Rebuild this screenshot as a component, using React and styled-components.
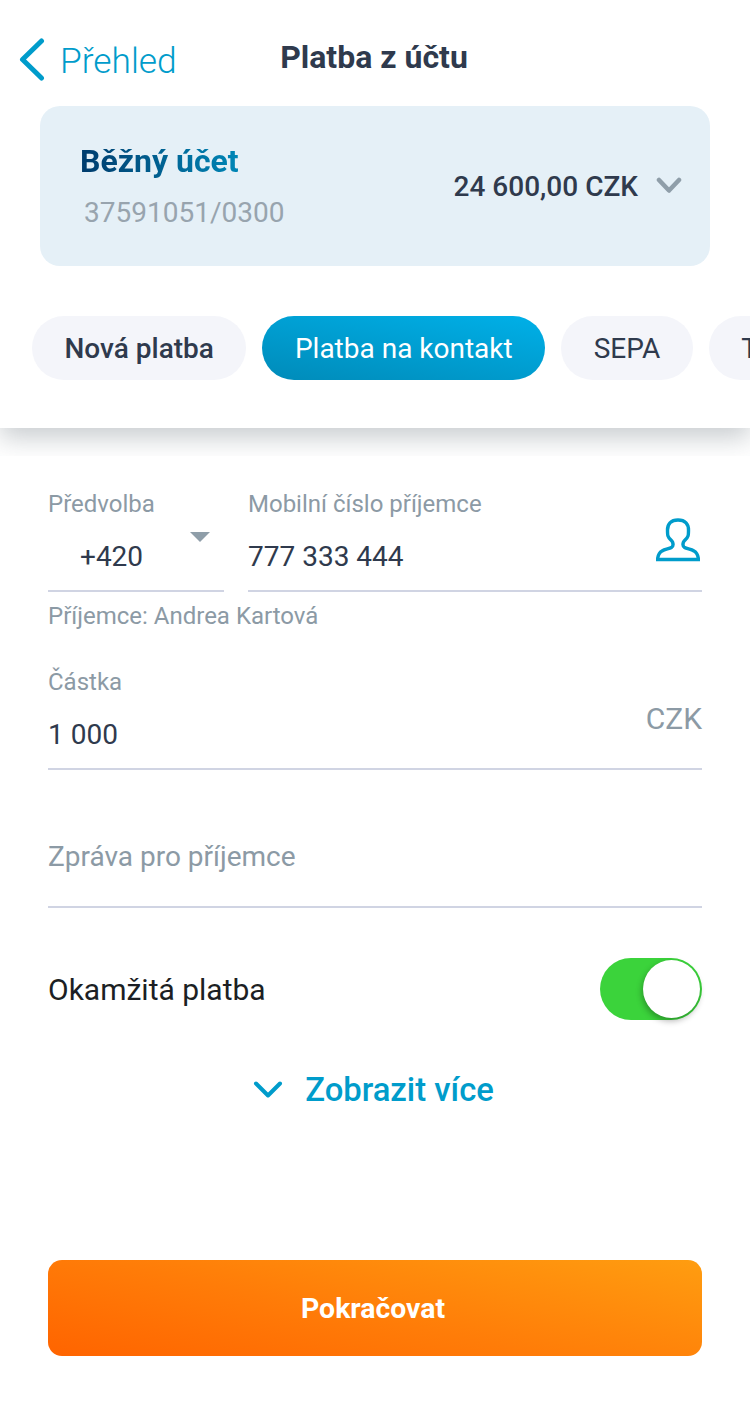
import React from "react";
import styled, { createGlobalStyle } from "styled-components";

const Global = createGlobalStyle`
  html, body { margin: 0; padding: 0; background: #fff; }
  * { box-sizing: border-box; }
  body { font-family: Roboto, "Liberation Sans", sans-serif; overflow: hidden; }
`;

const Page = styled.div`
  width: 750px;
  height: 1420px;
  display: flex;
  flex-direction: column;
  overflow: hidden;
  background: #fff;
`;

const Header = styled.header`
  height: 428px;
  display: flex;
  flex-direction: column;
  background: #fff;
  box-shadow: 0 10px 24px rgba(60, 75, 85, 0.28);
`;

const TopBar = styled.div`
  height: 106px;
  display: grid;
  grid-template-columns: 1fr auto 1fr;
  padding: 38px 2px 0 0;
  align-items: start;
`;

const Back = styled.div`
  display: flex;
  align-items: center;
  gap: 15px;
  height: 44px;
  padding-left: 19px;
  color: #009ccb;
  font-size: 35.3px;
  font-weight: 300;
`;

const BackLabel = styled.span`
  padding-top: 2px;
`;

const Title = styled.h1`
  margin: 0;
  height: 38px;
  line-height: 38px;
  font-size: 32px;
  font-weight: 700;
  color: #2f3a4d;
`;

const AccountCard = styled.section`
  margin: 0 40px;
  height: 160px;
  border-radius: 20px;
  background: #e5f0f7;
  display: flex;
  justify-content: space-between;
  align-items: flex-start;
  padding: 36px 28px 0 40px;
`;

const AccountInfo = styled.div`
  display: flex;
  flex-direction: column;
`;

const AccountName = styled.div`
  font-size: 32px;
  line-height: 38px;
  font-weight: 700;
  width: max-content;
  background: linear-gradient(80deg, #003a6b 0%, #0088b8 100%);
  -webkit-background-clip: text;
  background-clip: text;
  color: transparent;
`;

const AccountNumber = styled.div`
  margin: 17px 0 0 4px;
  font-size: 28px;
  line-height: 32px;
  color: #98a4ae;
`;

const Balance = styled.div`
  display: flex;
  align-items: center;
  gap: 18px;
  height: 32px;
  margin-top: 28px;
  font-size: 28px;
  font-weight: 500;
  color: #2f3a4d;
`;

const Pills = styled.nav`
  display: flex;
  gap: 16px;
  padding: 50px 0 0 32px;
  overflow: hidden;
`;

const Pill = styled.div`
  flex: none;
  height: 64px;
  line-height: 65px;
  padding: 0 32.5px;
  border-radius: 32px;
  font-size: 28px;
  font-weight: ${(p) => (p.$bold ? 500 : 400)};
  color: ${(p) => (p.$active ? "#fff" : "#2f3a4d")};
  background: ${(p) =>
    p.$active ? "linear-gradient(10deg, #008bb9 0%, #00b0e8 100%)" : "#f4f5fa"};
`;

const Form = styled.main`
  position: relative;
  flex: 1;
  margin-top: 28px;
  background: #fff;
  padding: 0 48px;
  display: flex;
  flex-direction: column;
`;

const PhoneRow = styled.div`
  display: grid;
  grid-template-columns: 176px 1fr;
  gap: 24px;
  padding-top: 34px;
`;

const Field = styled.div`
  height: ${(p) => p.$h}px;
  border-bottom: 2px solid #d0d4e3;
  display: flex;
  flex-direction: column;
`;

const Label = styled.div`
  font-size: 24px;
  line-height: 28px;
  color: #8c9aa5;
`;

const ValueLine = styled.div`
  display: flex;
  align-items: center;
  justify-content: space-between;
  margin-top: 20px;
  height: 36px;
  font-size: 28px;
  color: #2f3a4d;
`;

const PrefixValue = styled.span`
  margin-left: 32px;
`;

const Caret = styled.span`
  width: 0;
  height: 0;
  margin: -38px 14px 0 0;
  border-left: 10px solid transparent;
  border-right: 10px solid transparent;
  border-top: 10px solid #8f9ea9;
`;

const Helper = styled.div`
  margin-top: 10px;
  font-size: 24px;
  line-height: 28px;
  color: #8c9aa5;
`;

const PersonIcon = styled.svg`
  width: 44px;
  height: 44px;
  margin: -32px 2px 0 0;
`;

const AmountField = styled(Field)`
  margin-top: 38px;
`;

const Unit = styled.span`
  margin-top: -32px;
  font-size: 30px;
  color: #8c9aa5;
`;

const MessageField = styled(Field)`
  justify-content: flex-end;
  padding-bottom: 31px;
  font-size: 28px;
  line-height: 36px;
  color: #8c9aa5;
`;

const ToggleRow = styled.div`
  display: flex;
  justify-content: space-between;
  align-items: center;
  margin-top: 50px;
  height: 62px;
  font-size: 30px;
  color: #1c1f24;
`;

const Toggle = styled.div`
  width: 102px;
  height: 62px;
  padding: 2px;
  border-radius: 31px;
  background: #3bd33b;
  display: flex;
  justify-content: flex-end;
`;

const Knob = styled.div`
  width: 57px;
  height: 58px;
  border-radius: 50%;
  background: #fff;
  box-shadow: -1px 3px 6px rgba(0, 0, 0, 0.3);
`;

const More = styled.div`
  display: flex;
  justify-content: center;
  align-items: center;
  gap: 22px;
  margin-top: 50px;
  padding-right: 3px;
  height: 40px;
  font-size: 32.8px;
  font-weight: 500;
  color: #009ccb;
`;

const Submit = styled.div`
  margin-top: 150px;
  height: 96px;
  line-height: 98px;
  padding-right: 4px;
  text-align: center;
  border-radius: 14px;
  font-size: 28.4px;
  font-weight: 700;
  color: #fff;
  background: linear-gradient(12deg, #ff6400 0%, #ff7c08 45%, #ff9d10 100%);
`;

const Chevron = ({ w, h, color, sw, points }) => (
  <svg width={w} height={h} viewBox={`0 0 ${w} ${h}`} fill="none">
    <polyline points={points} stroke={color} strokeWidth={sw} strokeLinecap="round" strokeLinejoin="round" />
  </svg>
);

export default function App() {
  return (
    <Page>
      <Global />
      <Header>
        <TopBar>
          <Back>
            <Chevron w={26} h={44} color="#009ccb" sw={5} points="22.5,3 3.5,21.5 22.5,40" />
            <BackLabel>Přehled</BackLabel>
          </Back>
          <Title>Platba z účtu</Title>
        </TopBar>
        <AccountCard>
          <AccountInfo>
            <AccountName>Běžný účet</AccountName>
            <AccountNumber>37591051/0300</AccountNumber>
          </AccountInfo>
          <Balance>
            <span>24 600,00 CZK</span>
            <Chevron w={26} h={18} color="#8f9ea9" sw={4.5} points="3,3 13,13.5 23,3" />
          </Balance>
        </AccountCard>
        <Pills>
          <Pill $bold>Nová platba</Pill>
          <Pill $active>Platba na kontakt</Pill>
          <Pill>SEPA</Pill>
          <Pill>Trvalý příkaz</Pill>
        </Pills>
      </Header>
      <Form>
        <PhoneRow>
          <Field $h={102}>
            <Label>Předvolba</Label>
            <ValueLine>
              <PrefixValue>+420</PrefixValue>
              <Caret />
            </ValueLine>
          </Field>
          <Field $h={102}>
            <Label>Mobilní číslo příjemce</Label>
            <ValueLine>
              <span>777 333 444</span>
              <PersonIcon viewBox="0 0 44 44" fill="none">
                <path
                  d="M22 2C14.5 2 11.5 6.5 11.5 12C11.5 15 11.5 17 12 18C13 21 15.5 22 16.5 24C17.5 26.5 17.5 28 15.5 29.5C13 31 9 31 6 33C3 34.5 2 37 1.5 41.5H42.5C42 37 41 34.5 38 33C35 31 31 31 28.5 29.5C26.5 28 26.5 26.5 27.5 24C28.5 22 31 21 32 18C32.5 17 32.5 15 32.5 12C32.5 6.5 29.5 2 22 2Z"
                  stroke="#009ccb"
                  strokeWidth="3.4"
                />
              </PersonIcon>
            </ValueLine>
          </Field>
        </PhoneRow>
        <Helper>Příjemce: Andrea Kartová</Helper>
        <AmountField $h={102}>
          <Label>Částka</Label>
          <ValueLine>
            <span>1 000</span>
            <Unit>CZK</Unit>
          </ValueLine>
        </AmountField>
        <MessageField $h={138}>Zpráva pro příjemce</MessageField>
        <ToggleRow>
          <span>Okamžitá platba</span>
          <Toggle>
            <Knob />
          </Toggle>
        </ToggleRow>
        <More>
          <Chevron w={30} h={20} color="#009ccb" sw={4} points="3,3.5 15,15.5 27,3.5" />
          <span>Zobrazit více</span>
        </More>
        <Submit>Pokračovat</Submit>
      </Form>
    </Page>
  );
}
